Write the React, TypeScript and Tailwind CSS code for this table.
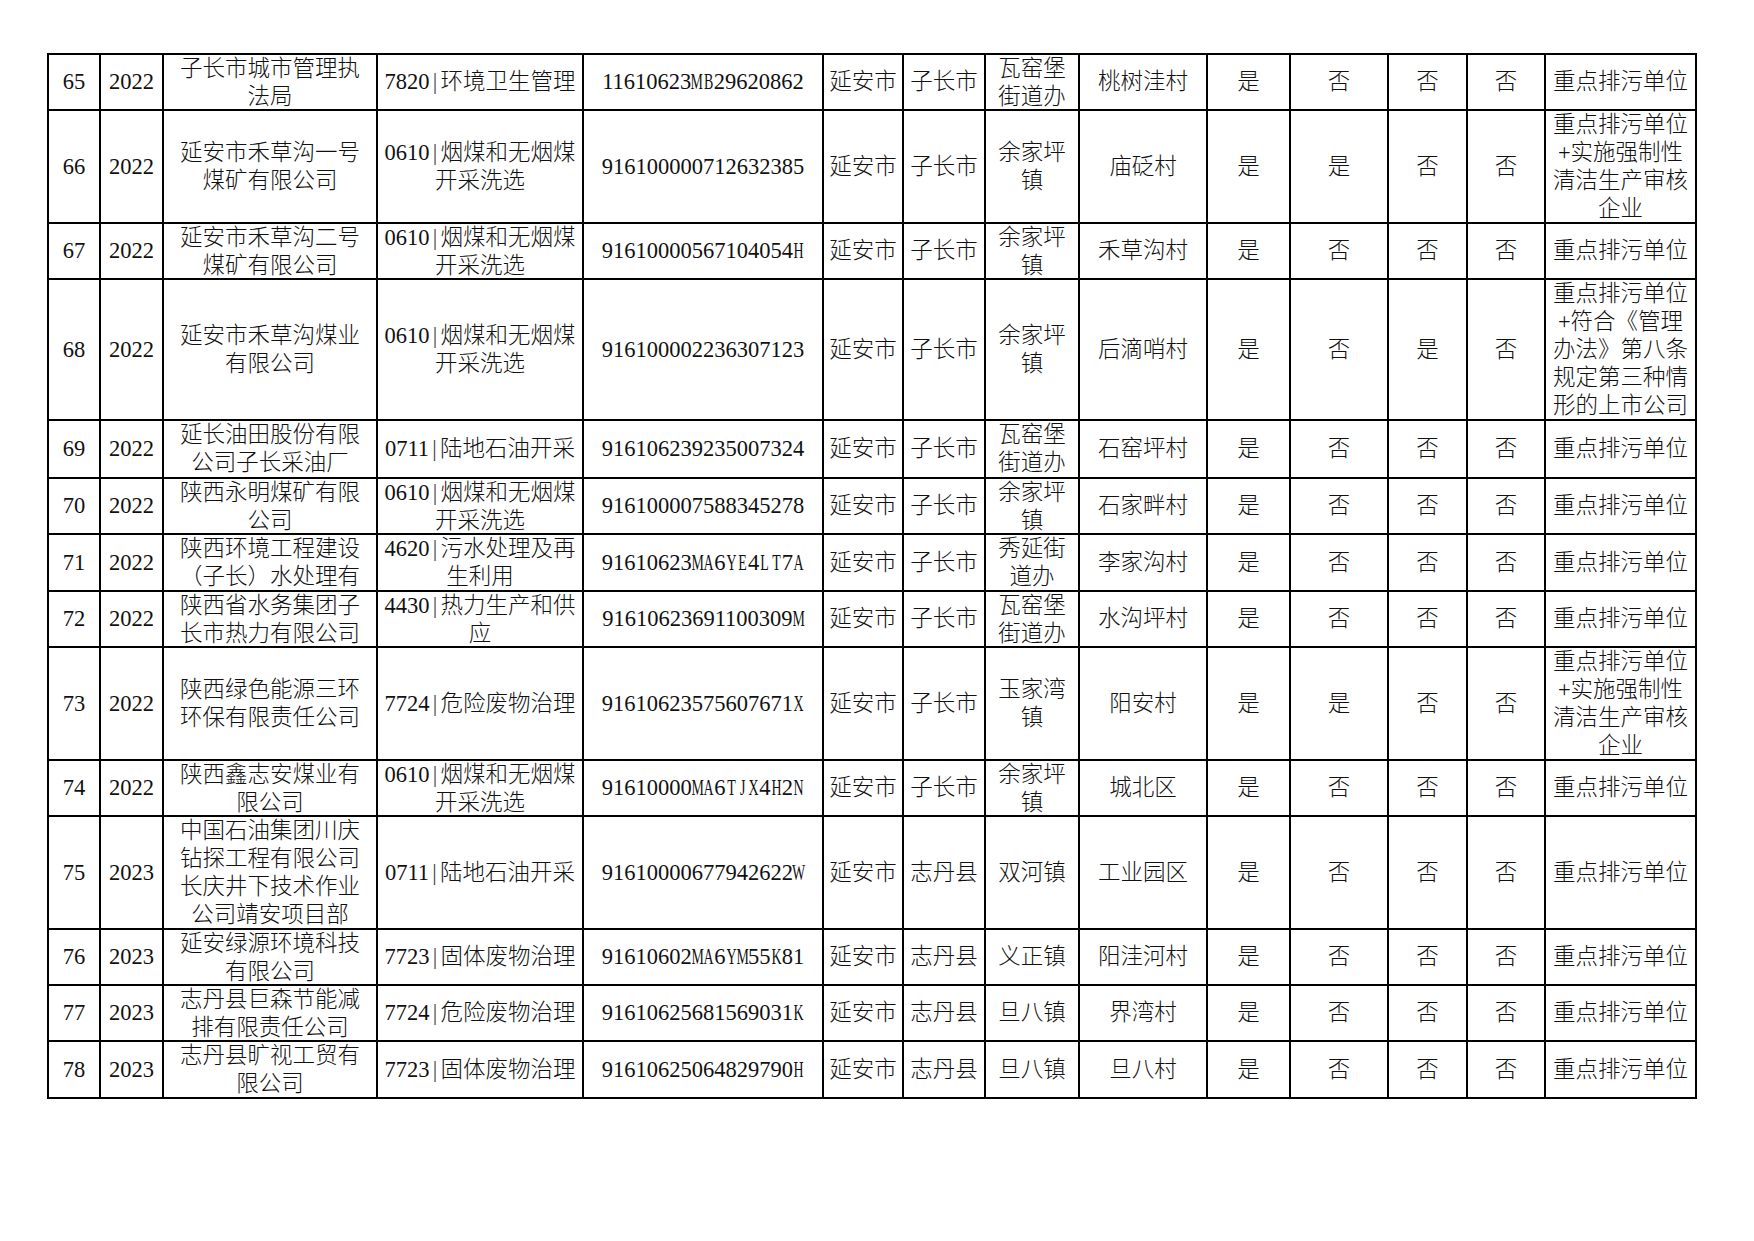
type Row = {
  no: string;
  year: string;
  h: string;
  company: string[];
  industry: [string, string[]];
  code: string;
  city: string;
  county: string;
  town: string[];
  village: string;
  flags: [string, string, string, string];
  note: string[];
};

const KEY = ['重点排污单位'];
const AUDIT = ['重点排污单位', '+实施强制性', '清洁生产审核', '企业'];
const COAL: [string, string[]] = ['0610', ['烟煤和无烟煤', '开采洗选']];
const OIL: [string, string[]] = ['0711', ['陆地石油开采']];
const NO3: [string, string, string, string] = ['是', '否', '否', '否'];

const rows: Row[] = [
  { no: '65', year: '2022', h: 'h-[56px]', company: ['子长市城市管理执', '法局'], industry: ['7820', ['环境卫生管理']], code: '11610623MB29620862', city: '延安市', county: '子长市', town: ['瓦窑堡', '街道办'], village: '桃树洼村', flags: NO3, note: KEY },
  { no: '66', year: '2022', h: 'h-[113px]', company: ['延安市禾草沟一号', '煤矿有限公司'], industry: COAL, code: '916100000712632385', city: '延安市', county: '子长市', town: ['余家坪', '镇'], village: '庙砭村', flags: ['是', '是', '否', '否'], note: AUDIT },
  { no: '67', year: '2022', h: 'h-[56px]', company: ['延安市禾草沟二号', '煤矿有限公司'], industry: COAL, code: '91610000567104054H', city: '延安市', county: '子长市', town: ['余家坪', '镇'], village: '禾草沟村', flags: NO3, note: KEY },
  { no: '68', year: '2022', h: 'h-[141px]', company: ['延安市禾草沟煤业', '有限公司'], industry: COAL, code: '916100002236307123', city: '延安市', county: '子长市', town: ['余家坪', '镇'], village: '后滴哨村', flags: ['是', '否', '是', '否'], note: ['重点排污单位', '+符合《管理', '办法》第八条', '规定第三种情', '形的上市公司'] },
  { no: '69', year: '2022', h: 'h-[58px]', company: ['延长油田股份有限', '公司子长采油厂'], industry: OIL, code: '916106239235007324', city: '延安市', county: '子长市', town: ['瓦窑堡', '街道办'], village: '石窑坪村', flags: NO3, note: KEY },
  { no: '70', year: '2022', h: 'h-[56px]', company: ['陕西永明煤矿有限', '公司'], industry: COAL, code: '916100007588345278', city: '延安市', county: '子长市', town: ['余家坪', '镇'], village: '石家畔村', flags: NO3, note: KEY },
  { no: '71', year: '2022', h: 'h-[57px]', company: ['陕西环境工程建设', '（子长）水处理有', '限公司'], industry: ['4620', ['污水处理及再', '生利用']], code: '91610623MA6YE4LT7A', city: '延安市', county: '子长市', town: ['秀延街', '道办'], village: '李家沟村', flags: NO3, note: KEY },
  { no: '72', year: '2022', h: 'h-[56px]', company: ['陕西省水务集团子', '长市热力有限公司'], industry: ['4430', ['热力生产和供', '应']], code: '91610623691100309M', city: '延安市', county: '子长市', town: ['瓦窑堡', '街道办'], village: '水沟坪村', flags: NO3, note: KEY },
  { no: '73', year: '2022', h: 'h-[113px]', company: ['陕西绿色能源三环', '环保有限责任公司'], industry: ['7724', ['危险废物治理']], code: '91610623575607671X', city: '延安市', county: '子长市', town: ['玉家湾', '镇'], village: '阳安村', flags: ['是', '是', '否', '否'], note: AUDIT },
  { no: '74', year: '2022', h: 'h-[56px]', company: ['陕西鑫志安煤业有', '限公司'], industry: COAL, code: '91610000MA6TJX4H2N', city: '延安市', county: '子长市', town: ['余家坪', '镇'], village: '城北区', flags: NO3, note: KEY },
  { no: '75', year: '2023', h: 'h-[113px]', company: ['中国石油集团川庆', '钻探工程有限公司', '长庆井下技术作业', '公司靖安项目部'], industry: OIL, code: '91610000677942622W', city: '延安市', county: '志丹县', town: ['双河镇'], village: '工业园区', flags: NO3, note: KEY },
  { no: '76', year: '2023', h: 'h-[56px]', company: ['延安绿源环境科技', '有限公司'], industry: ['7723', ['固体废物治理']], code: '91610602MA6YM55K81', city: '延安市', county: '志丹县', town: ['义正镇'], village: '阳洼河村', flags: NO3, note: KEY },
  { no: '77', year: '2023', h: 'h-[56px]', company: ['志丹县巨森节能减', '排有限责任公司'], industry: ['7724', ['危险废物治理']], code: '91610625681569031K', city: '延安市', county: '志丹县', town: ['旦八镇'], village: '界湾村', flags: NO3, note: KEY },
  { no: '78', year: '2023', h: 'h-[57px]', company: ['志丹县旷视工贸有', '限公司'], industry: ['7723', ['固体废物治理']], code: '91610625064829790H', city: '延安市', county: '志丹县', town: ['旦八镇'], village: '旦八村', flags: NO3, note: KEY },
];

function Cell({ lines }: { lines: React.ReactNode[] }) {
  return (
    <div className="flex flex-col items-center [justify-content:safe_center] overflow-hidden border-r-2 border-b-2 border-black text-center">
      {lines.map((l, i) => (
        <div key={i} className="whitespace-nowrap">
          {l}
        </div>
      ))}
    </div>
  );
}

function Code({ value }: { value: string }) {
  return (
    <span>
      {Array.from(value).map((ch, i) =>
        /[A-Z]/.test(ch) ? (
          <span key={i} className="inline-flex w-[11.25px] justify-center scale-x-[0.62]">
            {ch}
          </span>
        ) : (
          <span key={i}>{ch}</span>
        )
      )}
    </span>
  );
}

function Industry({ code, text }: { code: string; text: string[] }) {
  const lines: React.ReactNode[] = text.map((t, i) =>
    i === 0 ? (
      <span key={i}>
        {code}
        <span className="inline-block w-[11px] text-center text-[#444]">|</span>
        {t}
      </span>
    ) : (
      t
    )
  );
  return <Cell lines={lines} />;
}

export default function App() {
  return (
    <div className="w-[1754px] h-[1241px] bg-white pl-[47px] pt-[53px] text-[#111] font-light text-[22.5px] leading-[28px] [font-family:'Liberation_Serif','Noto_Sans_CJK_SC',serif]">
      <div className="w-[1650px] border-l-2 border-t-2 border-black">
        {rows.map((r) => (
          <div
            key={r.no}
            className={`grid grid-cols-[52px_63px_214px_206px_240px_80px_82px_94px_128px_83px_98px_79px_78px_151px] ${r.h}`}
          >
            <Cell lines={[r.no]} />
            <Cell lines={[r.year]} />
            <Cell lines={r.company} />
            <Industry code={r.industry[0]} text={r.industry[1]} />
            <Cell lines={[<Code key="c" value={r.code} />]} />
            <Cell lines={[r.city]} />
            <Cell lines={[r.county]} />
            <Cell lines={r.town} />
            <Cell lines={[r.village]} />
            {r.flags.map((f, i) => (
              <Cell key={i} lines={[f]} />
            ))}
            <Cell lines={r.note} />
          </div>
        ))}
      </div>
    </div>
  );
}
